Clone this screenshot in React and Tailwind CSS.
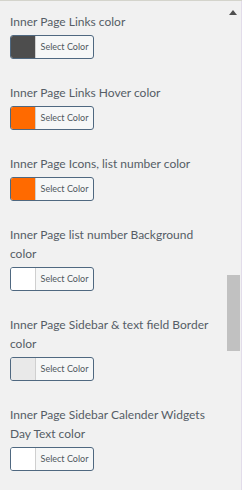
const items = [
    { label: ['Inner Page Links color'], color: '#4d4d4d' },
    { label: ['Inner Page Links Hover color'], color: '#ff6a00' },
    { label: ['Inner Page Icons, list number color'], color: '#ff6a00' },
    { label: ['Inner Page list number Background', 'color'], color: '#ffffff' },
    { label: ['Inner Page Sidebar & text field Border', 'color'], color: '#e9e9e9' },
    { label: ['Inner Page Sidebar Calender Widgets', 'Day Text color'], color: '#ffffff' },
];

const ColorControl = ({ label, color }) => (
    <div className="mb-[24px]">
        <div className="text-[12px] leading-[19px] text-[#555d66] mb-[4px]">
            {label.map((line) => (
                <div key={line} className="whitespace-nowrap">{line}</div>
            ))}
        </div>
        <button className="flex h-[24px] w-[84px] rounded-[3px] border border-[#4f6880] overflow-hidden bg-[#f6f7f7]">
            <span className="w-[25px] h-full border-r border-[#cfcfcf]" style={{ backgroundColor: color }} />
            <span className="flex-1 flex items-center justify-center text-[9px] text-[#50575e] whitespace-nowrap">Select Color</span>
        </button>
    </div>
);

const App = () => {
    return (
        <div
            className="w-[242px] h-[490px] bg-[#f1f1f1] border-t border-[#d4d4cc] flex overflow-hidden"
            style={{ fontFamily: 'Lato, "Open Sans", sans-serif' }}
        >
            <div className="w-[212px] pl-[10px] pt-[11px]">
                {items.map((item) => (
                    <ColorControl key={item.label[0]} label={item.label} color={item.color} />
                ))}
            </div>
            <div className="flex-1" />
            <div className="w-[16px] flex flex-col items-center border-r border-[#e2dcea]">
                <svg width="8" height="5" viewBox="0 0 8 5" className="mt-[9px] mr-[1px]">
                    <polygon points="4,0 8,5 0,5" fill="#505050" />
                </svg>
                <div className="w-[13px] h-[76px] bg-[#c1c1c1] mt-[260px]" />
            </div>
        </div>
    );
};

export default App;
